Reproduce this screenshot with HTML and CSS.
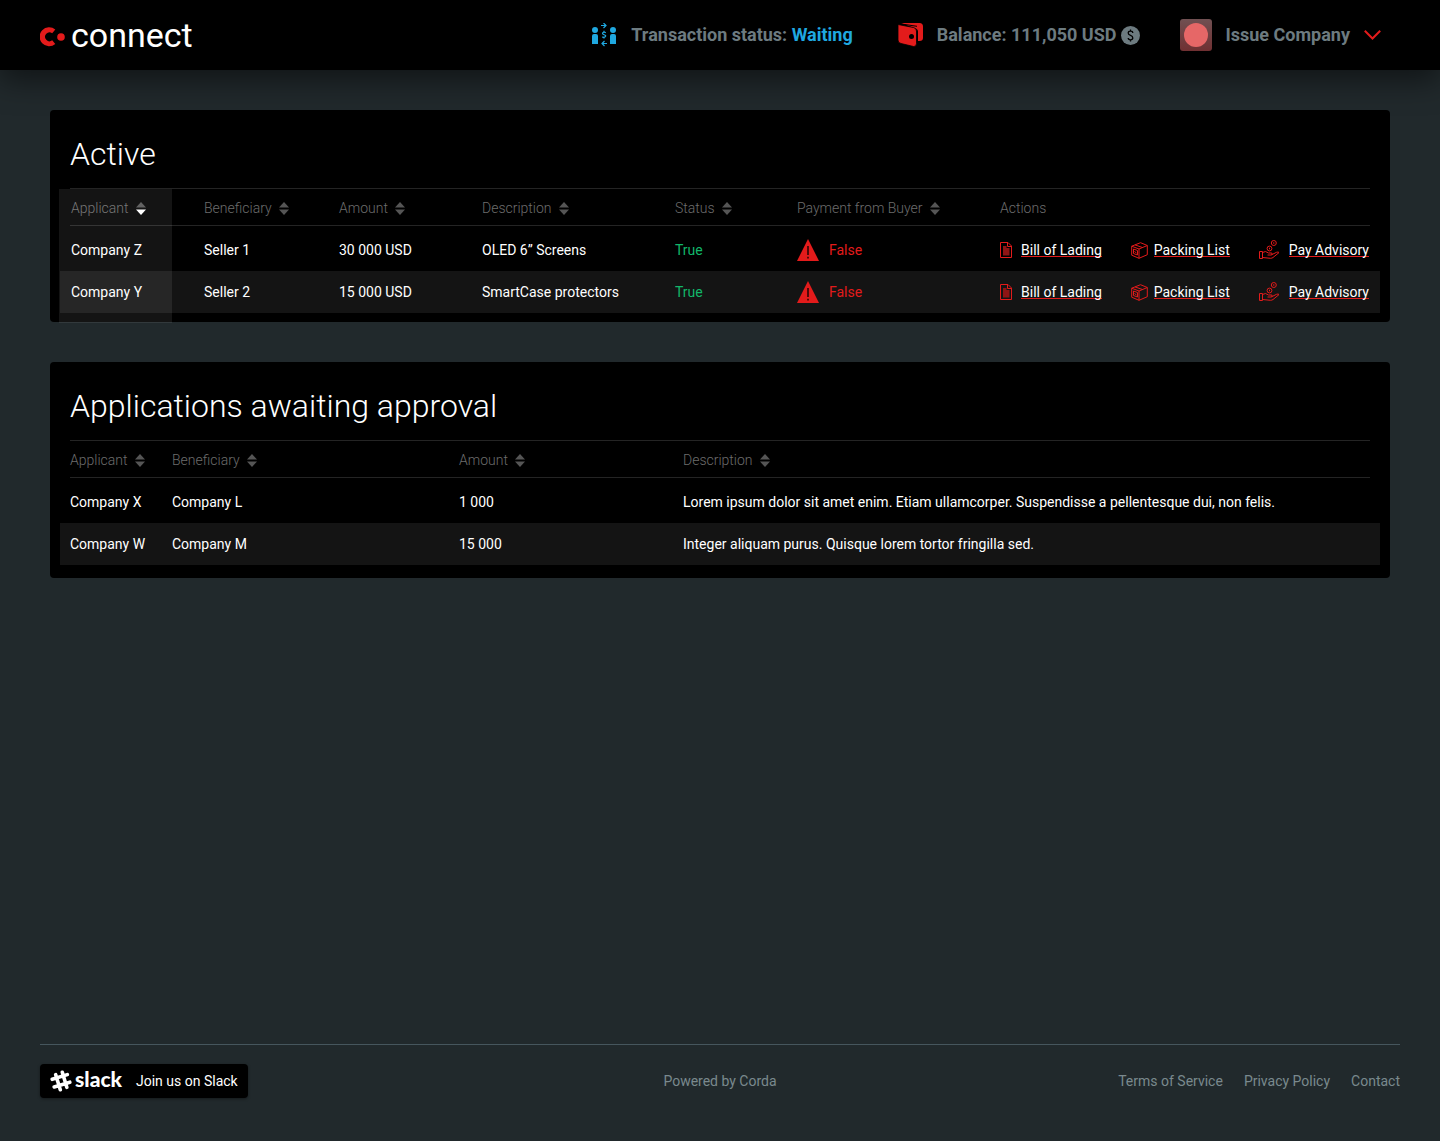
FILE: index.html
```html
<!DOCTYPE html>
<html lang="en">
<head>
<meta charset="utf-8">
<meta name="viewport" content="width=device-width, initial-scale=1">
<title>Connect</title>
<link rel="stylesheet" href="styles.css">
</head>
<body>
<svg class="sprite" aria-hidden="true">
  <symbol id="sort" viewBox="0 0 10 13"><path class="sort-up" d="M0 5.5 5 0l5 5.5z"/><path class="sort-down" d="M0 7.5h10L5 13z"/></symbol>
  <symbol id="warning" viewBox="0 0 22 22"><path fill="#e31b1b" d="M11 0 22 22H0z"/><path stroke="#000" stroke-width="1.3" d="M11 7v9M11 17.7v1.8"/></symbol>
  <symbol id="doc" viewBox="0 0 12 16"><path fill="none" stroke="#e31b1b" d="M.5.5H8L11.500 4v11.500H.5zM7.500.5v4h4"/><path fill="#8f1414" d="M3 4h3.500v2H9.500V13.500H3z"/></symbol>
  <symbol id="box" viewBox="0 0 17 17"><path fill="none" stroke="#e31b1b" stroke-linejoin="round" d="M.7 4.200 9.500.7l6.800 2.800v9.200L8 16.300.7 13.200zM.7 4.200 8 7v9.300M8 7l8.300-3.500M4 2.900l7.700 2.700M2.500 7l4 1.500v4.500l-4-1.500zM3.500 9.500l2 1.500"/></symbol>
  <symbol id="hand" viewBox="0 0 21 20"><g fill="none" stroke="#e31b1b" stroke-linejoin="round"><path d="M.5 11.500h3v7h-3zM3.500 12.500l3-1 3 1.500h3.300q1 1.700-.7 2H8.500M12.500 14.800l5-2.500q2-.7 2.500.3l-6 4.900q-1 .8-2.500.8l-8-.8"/><circle cx="10.500" cy="8.500" r="2.400"/><circle cx="14.800" cy="3" r="2.500"/><path d="M10.500 7.700v1.600M14.800 2.200v1.600"/></g></symbol>
</svg>

<header class="topbar">
  <a class="brand" href="#">
    <svg width="25" height="20" viewBox="0 0 25 20" aria-hidden="true"><path fill="#e31b1b" d="M15.300 2.600A9.500 9.500 0 1 0 15.300 17L12.200 13.300A4.400 4.400 0 1 1 12.200 6.300z"/><circle cx="21" cy="10" r="3.800" fill="#e31b1b"/></svg>
    <span>connect</span>
  </a>
  <div class="topbar-info">
    <div class="status">
      <svg width="26" height="24" viewBox="0 0 26 24" aria-hidden="true"><g fill="#1fa8e0"><circle cx="4" cy="7" r="3"/><circle cx="22" cy="7" r="3"/><path d="M1 21v-8q0-2 2-2h2q2 0 2 2v8zM19 21v-8q0-2 2-2h2q2 0 2 2v8z"/></g><g fill="none" stroke="#1fa8e0" stroke-width="1.200"><path d="M10 2.500h4.500M12.500 0l2.500 2.500L12.500 5M16 20.500h-4.500M13.500 18l-2.500 2.500 2.500 2.500M14.800 9.700q-1.800-1.200-2.900 0t1.200 2 1.200 2-3 .2M13 7.800v1.200M13 14.300v1.200"/></g></svg>
      <span>Transaction status: <strong>Waiting</strong></span>
    </div>
    <div class="balance">
      <svg width="25" height="24" viewBox="0 0 25 24" aria-hidden="true"><path fill="#e31b1b" d="M3 0H21.500Q25 0 25 3.500V15q0 3-3.500 3H20V8.500Q20 6 17 5.200z"/><path fill="#e31b1b" stroke="#000" stroke-width=".8" d="M0 1.500 15.500 4.500Q18.500 5.200 18.500 8V20.500Q18.500 24 15.500 23.500L3 20.500Q0 20 0 17z"/><circle cx="13.500" cy="13.500" r="2.500"/><path fill="none" stroke="#000" d="M2 .8 19 3.300"/></svg>
      <span>Balance: 111,050 USD</span>
      <svg class="coin" width="19" height="19" viewBox="0 0 19 19" aria-hidden="true"><circle cx="9.500" cy="9.500" r="9.500" fill="#6d7b80"/><path fill="none" stroke="#000" stroke-width="1.300" d="M11.800 7q0-1.800-2.300-1.800T7.200 7q0 1.500 2.300 2.300T11.800 12q0 1.800-2.300 1.800T7.200 12M9.500 3.500V5M9.500 14v1.500"/></svg>
    </div>
    <button class="account" type="button">
      <span class="avatar"></span>
      <span>Issue Company</span>
      <svg width="17" height="10" viewBox="0 0 17 10" aria-hidden="true"><path fill="none" stroke="#e31b1b" stroke-width="2" d="m.8.800 7.700 7.700L16.200.8"/></svg>
    </button>
  </div>
</header>

<main>
  <section class="panel">
    <h2>Active</h2>
    <div class="sort-area">
    <table class="active-table">
      <colgroup><col class="c-applicant"><col class="c-beneficiary"><col class="c-amount"><col class="c-description"><col class="c-status"><col class="c-payment"><col class="c-actions"></colgroup>
      <thead><tr>
        <th class="sorted" aria-sort="descending"><button type="button">Applicant<svg><use href="#sort"/></svg></button></th>
        <th><button type="button">Beneficiary<svg><use href="#sort"/></svg></button></th>
        <th><button type="button">Amount<svg><use href="#sort"/></svg></button></th>
        <th><button type="button">Description<svg><use href="#sort"/></svg></button></th>
        <th><button type="button">Status<svg><use href="#sort"/></svg></button></th>
        <th><button type="button">Payment from Buyer<svg><use href="#sort"/></svg></button></th>
        <th>Actions</th>
      </tr></thead>
      <tbody>
        <tr><td>Company Z</td><td>Seller 1</td><td>30 000 USD</td><td>OLED 6” Screens</td><td class="yes">True</td>
          <td class="no"><div class="flag"><svg width="22" height="22"><use href="#warning"/></svg>False</div></td>
          <td><div class="actions">
            <a class="bill" href="#"><svg width="12" height="16"><use href="#doc"/></svg><span>Bill of Lading</span></a>
            <a class="packing" href="#"><svg width="17" height="17"><use href="#box"/></svg><span>Packing List</span></a>
            <a class="pay" href="#"><svg width="21" height="20"><use href="#hand"/></svg><span>Pay Advisory</span></a>
          </div></td></tr>
        <tr><td>Company Y</td><td>Seller 2</td><td>15 000 USD</td><td>SmartCase protectors</td><td class="yes">True</td>
          <td class="no"><div class="flag"><svg width="22" height="22"><use href="#warning"/></svg>False</div></td>
          <td><div class="actions">
            <a class="bill" href="#"><svg width="12" height="16"><use href="#doc"/></svg><span>Bill of Lading</span></a>
            <a class="packing" href="#"><svg width="17" height="17"><use href="#box"/></svg><span>Packing List</span></a>
            <a class="pay" href="#"><svg width="21" height="20"><use href="#hand"/></svg><span>Pay Advisory</span></a>
          </div></td></tr>
      </tbody>
    </table>
    </div>
  </section>

  <section class="panel awaiting">
    <h2>Applications awaiting approval</h2>
    <table class="awaiting-table">
      <colgroup><col class="w-applicant"><col class="w-beneficiary"><col class="w-amount"><col class="w-description"></colgroup>
      <thead><tr>
        <th><button type="button">Applicant<svg><use href="#sort"/></svg></button></th>
        <th><button type="button">Beneficiary<svg><use href="#sort"/></svg></button></th>
        <th><button type="button">Amount<svg><use href="#sort"/></svg></button></th>
        <th><button type="button">Description<svg><use href="#sort"/></svg></button></th>
      </tr></thead>
      <tbody>
        <tr><td>Company X</td><td>Company L</td><td>1 000</td><td>Lorem ipsum dolor sit amet enim. Etiam ullamcorper. Suspendisse a pellentesque dui, non felis.</td></tr>
        <tr><td>Company W</td><td>Company M</td><td>15 000</td><td>Integer aliquam purus. Quisque lorem tortor fringilla sed.</td></tr>
      </tbody>
    </table>
  </section>
</main>

<footer>
  <div class="footer-side">
    <a class="slack" href="#">
      <svg width="22" height="22" viewBox="0 0 22 22" aria-hidden="true"><path fill="none" stroke="#fff" stroke-width="3.600" stroke-linecap="round" d="M5.700 4.700 10.300 19.700M12.300 2.300 16.800 17.300M2.200 9.300 17.300 4.600M4.200 17 19.800 12.200"/></svg>
      <span class="slack-name">slack</span>
      <span>Join us on Slack</span>
    </a>
  </div>
  <p>Powered by Corda</p>
  <nav class="footer-side"><a href="#">Terms of Service</a><a href="#">Privacy Policy</a><a href="#">Contact</a></nav>
</footer>
</body>
</html>
```
FILE: styles.css
```css
* { box-sizing: border-box; }

body {
  margin: 0;
  min-height: 100vh;
  display: flex;
  flex-direction: column;
  background: #21292c;
  color: #fff;
  font: 14px/20px Roboto, "Liberation Sans", sans-serif;
}

a { color: inherit; text-decoration: none; }
button { padding: 0; border: 0; background: none; color: inherit; font: inherit; cursor: pointer; }
svg { display: block; flex: none; }
.sprite { position: absolute; width: 0; height: 0; }

.topbar {
  display: flex;
  align-items: center;
  justify-content: space-between;
  height: 70px;
  padding: 0 59px 0 40px;
  background: #000;
  box-shadow: 0 10px 30px rgba(0, 0, 0, 0.5);
}
.brand { display: flex; align-items: center; gap: 6px; font-size: 34px; line-height: 40px; }
.brand svg { margin-top: 4px; }
.topbar-info { display: flex; gap: 40px; color: #6d7b80; font-size: 18px; font-weight: 700; }
.status, .balance, .account { display: flex; align-items: center; gap: 14px; }
.status { margin-right: 5px; }
.status strong { color: #1fa8e0; font-weight: 700; }
.balance .coin { margin-left: -10px; }
.avatar {
  display: grid;
  place-items: center;
  width: 32px;
  height: 32px;
  border-radius: 3px;
  background: linear-gradient(#705052, #703032);
}
.avatar::before { content: ""; width: 24px; height: 24px; border-radius: 50%; background: #e66767; }

main { flex: 1; display: flex; flex-direction: column; gap: 40px; padding: 40px 50px; }
.panel { padding: 20px 10px 0; border-radius: 4px; background: #000; }
.awaiting { padding-bottom: 13px; }
h2 { margin: 0 10px 10px; font-size: 32px; font-weight: 300; line-height: 48px; }

table { width: 100%; table-layout: fixed; border-collapse: collapse; }
thead tr {
  height: 38px;
  background:
    linear-gradient(#242424, #242424) 10px 0 / calc(100% - 20px) 1px no-repeat,
    linear-gradient(#242424, #242424) 10px 100% / calc(100% - 20px) 1px no-repeat;
}
th { padding: 2px 0 0 10px; color: #6c6c6c; font-weight: 300; text-align: left; }
th button { display: flex; align-items: center; gap: 7px; }
th svg { width: 10px; height: 13px; fill: #555; }
td { height: 42px; padding: 0 0 0 10px; }
tbody tr:first-child td { height: 45px; padding-top: 3px; }
tbody tr:nth-child(even) { background: #141414; }

/* The highlight of the sorted column runs down to the panel's lower edge. */
.sort-area { margin: 0 0 -1px -1px; padding: 0 0 10px 1px; overflow: hidden; }
.sorted { position: relative; }
.sorted::after {
  content: "";
  position: absolute;
  inset: 1px 0 -1000px -1px;
  background: rgba(255, 255, 255, 0.08);
  pointer-events: none;
}
.sorted svg { --down: #fff; }
.sort-down { fill: var(--down, #555); }

.active-table th, .active-table td { padding-left: 32px; }
.active-table th:first-child, .active-table td:first-child { padding-left: 11px; }
.c-applicant { width: 112px; }
.c-beneficiary { width: 135px; }
.c-amount { width: 143px; }
.c-description { width: 193px; }
.c-status { width: 122px; }
.c-payment { width: 203px; }
.c-actions { width: 412px; }
.w-applicant { width: 102px; }
.w-beneficiary { width: 287px; }
.w-amount { width: 224px; }
.w-description { width: 707px; }

.yes { color: #12b76a; }
.no { color: #e31b1b; }
.flag { display: flex; align-items: center; gap: 10px; }
.actions { display: flex; justify-content: space-between; padding-right: 11px; }
.actions a { display: flex; align-items: center; gap: 9px; }
.actions .packing { gap: 6px; }
.actions span { border-bottom: 1px solid #e31b1b; line-height: 12px; }

footer {
  display: flex;
  align-items: center;
  margin: 0 40px;
  padding: 19px 0 43px;
  border-top: 1px solid #46565d;
  color: #7a898e;
}
footer p { margin: 0; }
.footer-side { flex: 1; display: flex; }
nav.footer-side { justify-content: flex-end; gap: 21px; }
.slack {
  display: flex;
  align-items: center;
  height: 34px;
  padding: 0 10px;
  border-radius: 4px;
  background: #000;
  color: #fff;
  box-shadow: 0 1px 3px rgba(0, 0, 0, 0.4);
}
.slack-name { margin: 0 14px 4px 3px; font: 900 21px/24px Lato, sans-serif; }
```
